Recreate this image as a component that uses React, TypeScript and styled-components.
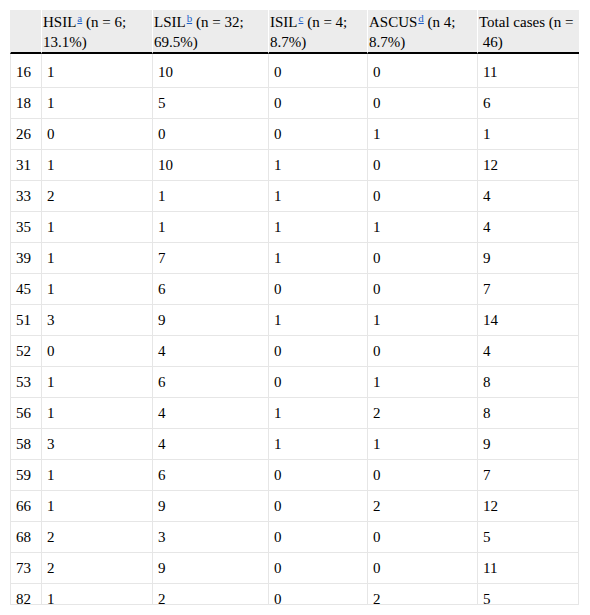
import React from "react";
import styled, { createGlobalStyle } from "styled-components";

const GlobalStyle = createGlobalStyle`
  html, body { background: #fff; }
  body {
    margin: 8px;
    font-family: "Liberation Serif", "Times New Roman", serif;
    color: #000;
  }
`;

const Viewport = styled.div`
  margin: 2px;
  width: 569px;
  height: 594px;
  overflow: hidden;
  border-bottom: 1px solid #e6e6e6;
`;

const Table = styled.table`
  border-collapse: separate;
  border-spacing: 0;
  table-layout: fixed;
  width: 569px;
  font-size: 15px;
  line-height: 20px;
`;

const HeadCell = styled.th<{ $first?: boolean }>`
  background: #ececec;
  font-weight: normal;
  text-align: left;
  vertical-align: top;
  padding: 2px 2px 0 1px;
  border-left: 1px solid ${(p) => (p.$first ? "#ececec" : "#fff")};
  border-bottom: 2px solid #000;
`;

const BodyCell = styled.td<{ $last?: boolean; $firstRow?: boolean }>`
  text-align: left;
  vertical-align: top;
  padding: ${(p) => (p.$firstRow ? "8px" : "5px")} 4px 5px 5px;
  border-left: 1px solid #e6e6e6;
  border-right: ${(p) => (p.$last ? "1px solid #e6e6e6" : "0")};
  border-bottom: 1px solid #e6e6e6;
  white-space: nowrap;
`;

const Note = styled.a`
  display: inline-block;
  vertical-align: 5px;
  margin-left: 1px;
  font-size: 11px;
  line-height: 11px;
  color: #1a5fc8;
  text-decoration: underline;
`;

const widths = [31, 111, 116, 99, 110, 102];

const headers: { label: string; note?: string; rest: string }[] = [
  { label: "", rest: "" },
  { label: "HSIL", note: "a", rest: " (n = 6; 13.1%)" },
  { label: "LSIL", note: "b", rest: " (n = 32; 69.5%)" },
  { label: "ISIL", note: "c", rest: " (n = 4; 8.7%)" },
  { label: "ASCUS", note: "d", rest: " (n 4; 8.7%)" },
  { label: "Total cases (n = \u00a046)", rest: "" },
];

const rows: number[][] = [
  [16, 1, 10, 0, 0, 11],
  [18, 1, 5, 0, 0, 6],
  [26, 0, 0, 0, 1, 1],
  [31, 1, 10, 1, 0, 12],
  [33, 2, 1, 1, 0, 4],
  [35, 1, 1, 1, 1, 4],
  [39, 1, 7, 1, 0, 9],
  [45, 1, 6, 0, 0, 7],
  [51, 3, 9, 1, 1, 14],
  [52, 0, 4, 0, 0, 4],
  [53, 1, 6, 0, 1, 8],
  [56, 1, 4, 1, 2, 8],
  [58, 3, 4, 1, 1, 9],
  [59, 1, 6, 0, 0, 7],
  [66, 1, 9, 0, 2, 12],
  [68, 2, 3, 0, 0, 5],
  [73, 2, 9, 0, 0, 11],
  [82, 1, 2, 0, 2, 5],
];

export default function App() {
  return (
    <>
      <GlobalStyle />
      <Viewport>
        <Table>
          <colgroup>
            {widths.map((w, i) => (
              <col key={i} style={{ width: w }} />
            ))}
          </colgroup>
          <thead>
            <tr>
              {headers.map((h, i) => (
                <HeadCell key={i} $first={i === 0}>
                  {h.label}
                  {h.note && <Note href="#">{h.note}</Note>}
                  {h.rest}
                </HeadCell>
              ))}
            </tr>
          </thead>
          <tbody>
            {rows.map((r, ri) => (
              <tr key={ri}>
                {r.map((v, ci) => (
                  <BodyCell key={ci} $last={ci === r.length - 1} $firstRow={ri === 0}>
                    {v}
                  </BodyCell>
                ))}
              </tr>
            ))}
          </tbody>
        </Table>
      </Viewport>
    </>
  );
}
